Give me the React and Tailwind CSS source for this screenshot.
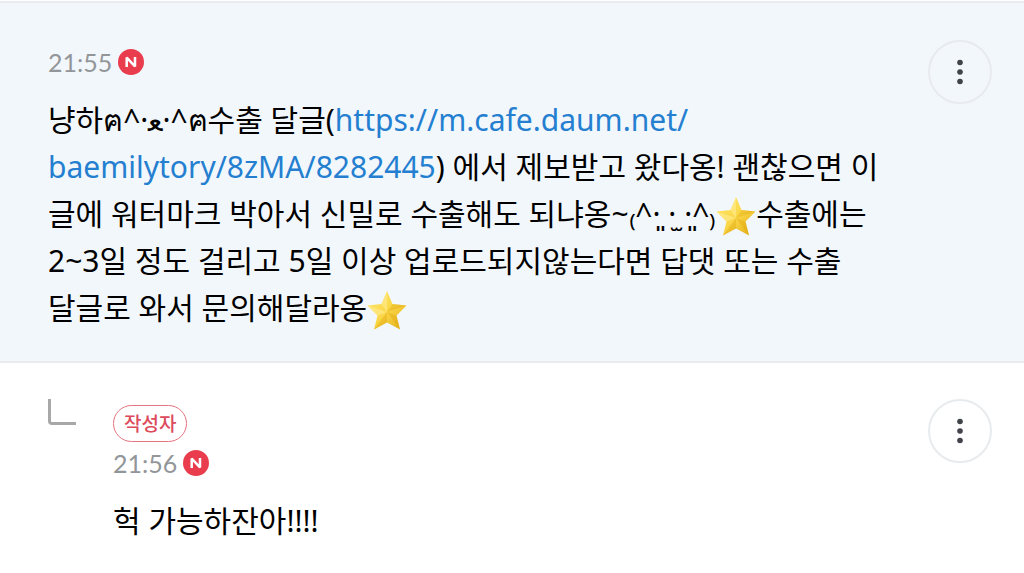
function NewBadge() {
  return (
    <svg viewBox="0 0 26 26" className="w-[26px] h-[26px]" role="img" aria-label="New">
      <circle cx="13" cy="13" r="13" fill="#e93d4d" />
      <path d="M8.7 18V8.6L17 17.4V8" fill="none" stroke="#fff" strokeWidth="2.5" strokeLinejoin="bevel" />
    </svg>
  );
}

function Star() {
  return (
    <svg viewBox="0 0 40 40" className="inline-block w-10 h-10 -my-1 align-middle" role="img" aria-label="star">
      <defs>
        <linearGradient id="gold" x1="0" y1="0" x2="1" y2="1">
          <stop offset="0" stopColor="#ffe66b" />
          <stop offset="0.5" stopColor="#fbd84a" />
          <stop offset="1" stopColor="#e0aa12" />
        </linearGradient>
      </defs>
      <path d="M20 0L25.5 13L39.5 14.5L29.5 24.5L33 38.5L20 31.5L7 38.5L10.5 24.5L0.5 14.5L14.5 13Z" fill="url(#gold)" />
      <path d="M20 0L14.5 13L20 21ZM0.5 14.5L10.5 24.5L20 21Z" fill="#fff0a0" opacity="0.5" />
      <path d="M25.5 13L39.5 14.5L20 21ZM29.5 24.5L33 38.5L20 21ZM20 31.5L7 38.5L20 21Z" fill="#d99a00" opacity="0.3" />
    </svg>
  );
}

function MoreButton() {
  return (
    <button type="button" aria-label="More" className="shrink-0 w-16 h-16 rounded-full border-2 border-[#e8ebed] flex items-center justify-center">
      <svg viewBox="0 0 6 26" className="w-[6px] h-[26px]" fill="#404347">
        <circle cx="3" cy="3.5" r="2.8" />
        <circle cx="3" cy="13" r="2.8" />
        <circle cx="3" cy="22.5" r="2.8" />
      </svg>
    </button>
  );
}

function CommentTime({ children }) {
  return (
    <div className="flex items-center gap-1.5 h-7">
      <time className="font-['Lato','Noto_Sans',sans-serif] text-[25px] leading-7 text-[#929699]">{children}</time>
      <NewBadge />
    </div>
  );
}

function App() {
  return (
    <main className="font-['Noto_Sans','Noto_Sans_CJK_KR',sans-serif] text-black bg-white">
      <article className="flex justify-between border-t-2 border-b-2 border-[#e9ebef] bg-[#f2f7fc] mt-px pt-[37px] pb-[30px] pl-12 pr-8">
        <div className="pt-2">
          <CommentTime>21:55</CommentTime>
          <p className="mt-5 text-[30px] leading-[47px] whitespace-nowrap">
            냥하ฅ^·ﻌ·^ฅ수출 달글(
            <a href="https://m.cafe.daum.net/baemilytory/8zMA/8282445" className="text-[#247fd0]">
              https://m.cafe.daum.net/
              <br />
              baemilytory/8zMA/8282445
            </a>
            ) 에서 제보받고 왔다옹! 괜찮으면 이
            <br />
            글에 워터마크 박아서 신밀로 수출해도 되냐옹~₍^·͈ ·̫ ·͈^₎
            <Star />
            수출에는
            <br />
            2~3일 정도 걸리고 5일 이상 업로드되지않는다면 답댓 또는 수출
            <br />
            달글로 와서 문의해달라옹
            <Star />
          </p>
        </div>
        <MoreButton />
      </article>

      <article className="flex justify-between pt-9 pb-4 pl-12 pr-8">
        <div className="flex">
          <div className="w-7 h-[26px] mr-[37px] border-l-3 border-b-3 border-[#a8a8a8] rounded-bl-sm" />
          <div className="pt-1.5">
            <span className="flex w-fit items-center h-[37px] mb-[7px] px-2.5 rounded-full border border-[#e57380] text-[19px] leading-6 font-medium text-[#dc4a5b]">
              작성자
            </span>
            <CommentTime>21:56</CommentTime>
            <p className="mt-5 text-[30px] leading-[47px]">헉 가능하잔아!!!!</p>
          </div>
        </div>
        <MoreButton />
      </article>
    </main>
  );
}

export default App;
